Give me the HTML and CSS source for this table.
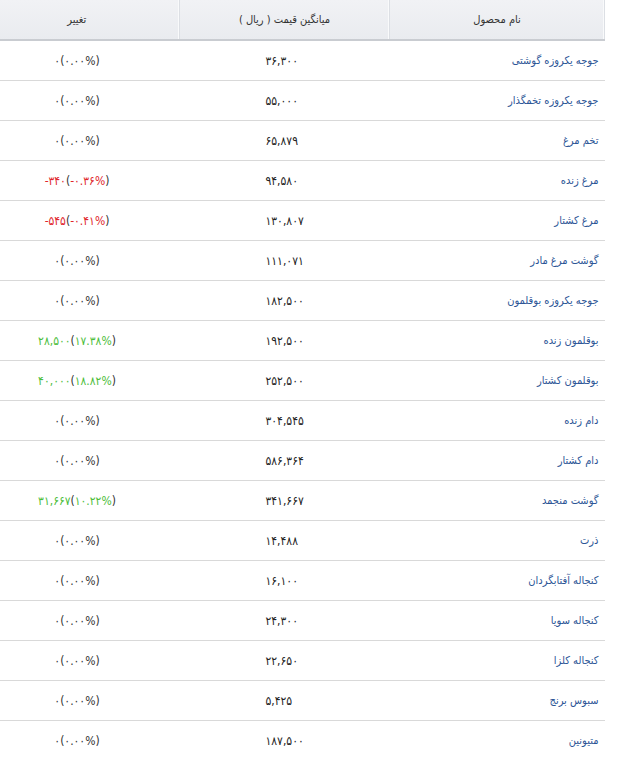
FILE: index.html
```html
<!DOCTYPE html>
<html lang="fa" dir="rtl">
<head>
<meta charset="utf-8">
<link rel="stylesheet" href="styles.css">
</head>
<body>
<table class="prices">
  <colgroup>
    <col class="c-name">
    <col class="c-price">
    <col class="c-change">
  </colgroup>
  <thead>
    <tr>
      <th class="h-name">نام محصول</th>
      <th class="h-price">میانگین قیمت ( ریال )</th>
      <th class="h-change">تغییر</th>
    </tr>
  </thead>
  <tbody>
    <tr><td class="name">جوجه یکروزه گوشتی</td><td class="price">۳۶,۳۰۰</td><td class="change"><span>۰(۰.۰۰%)</span></td></tr>
    <tr><td class="name">جوجه یکروزه تخمگذار</td><td class="price">۵۵,۰۰۰</td><td class="change"><span>۰(۰.۰۰%)</span></td></tr>
    <tr><td class="name">تخم مرغ</td><td class="price">۶۵,۸۷۹</td><td class="change"><span>۰(۰.۰۰%)</span></td></tr>
    <tr><td class="name">مرغ زنده</td><td class="price">۹۴,۵۸۰</td><td class="change"><span><b class="neg">-۳۴۰</b>(<b class="neg">-۰.۳۶%</b>)</span></td></tr>
    <tr><td class="name">مرغ کشتار</td><td class="price">۱۳۰,۸۰۷</td><td class="change"><span><b class="neg">-۵۴۵</b>(<b class="neg">-۰.۴۱%</b>)</span></td></tr>
    <tr><td class="name">گوشت مرغ مادر</td><td class="price">۱۱۱,۰۷۱</td><td class="change"><span>۰(۰.۰۰%)</span></td></tr>
    <tr><td class="name">جوجه یکروزه بوقلمون</td><td class="price">۱۸۲,۵۰۰</td><td class="change"><span>۰(۰.۰۰%)</span></td></tr>
    <tr><td class="name">بوقلمون زنده</td><td class="price">۱۹۲,۵۰۰</td><td class="change"><span><b class="pos">۲۸,۵۰۰</b>(<b class="pos">۱۷.۳۸%</b>)</span></td></tr>
    <tr><td class="name">بوقلمون کشتار</td><td class="price">۲۵۲,۵۰۰</td><td class="change"><span><b class="pos">۴۰,۰۰۰</b>(<b class="pos">۱۸.۸۲%</b>)</span></td></tr>
    <tr><td class="name">دام زنده</td><td class="price">۳۰۴,۵۴۵</td><td class="change"><span>۰(۰.۰۰%)</span></td></tr>
    <tr><td class="name">دام کشتار</td><td class="price">۵۸۶,۳۶۴</td><td class="change"><span>۰(۰.۰۰%)</span></td></tr>
    <tr><td class="name">گوشت منجمد</td><td class="price">۳۴۱,۶۶۷</td><td class="change"><span><b class="pos">۳۱,۶۶۷</b>(<b class="pos">۱۰.۲۲%</b>)</span></td></tr>
    <tr><td class="name">ذرت</td><td class="price">۱۴,۴۸۸</td><td class="change"><span>۰(۰.۰۰%)</span></td></tr>
    <tr><td class="name">کنجاله آفتابگردان</td><td class="price">۱۶,۱۰۰</td><td class="change"><span>۰(۰.۰۰%)</span></td></tr>
    <tr><td class="name">کنجاله سویا</td><td class="price">۲۴,۳۰۰</td><td class="change"><span>۰(۰.۰۰%)</span></td></tr>
    <tr><td class="name">کنجاله کلزا</td><td class="price">۲۲,۶۵۰</td><td class="change"><span>۰(۰.۰۰%)</span></td></tr>
    <tr><td class="name">سبوس برنج</td><td class="price">۵,۴۲۵</td><td class="change"><span>۰(۰.۰۰%)</span></td></tr>
    <tr><td class="name">متیونین</td><td class="price">۱۸۷,۵۰۰</td><td class="change"><span>۰(۰.۰۰%)</span></td></tr>
  </tbody>
</table>
</body>
</html>
```

FILE: styles.css
```css
html, body {
  margin: 0;
  padding: 0;
  background: #ffffff;
  overflow: hidden;
}

body {
  font-family: "DejaVu Sans Condensed", "DejaVu Sans", sans-serif;
  font-stretch: condensed;
  font-size: 11px;
  color: #333333;
}

.prices {
  width: 605px;
  margin-right: 13px;
  border-collapse: collapse;
  table-layout: fixed;
}

.c-name { width: 215px; }
.c-price { width: 210px; }
.c-change { width: 180px; }

thead tr {
  background: linear-gradient(#f1f2f5, #e9ebef);
}

th {
  height: 39px;
  padding: 0;
  font-weight: normal;
  color: #333333;
  text-align: center;
  border-bottom: 2px solid #c9ccd1;
  border-left: 1px solid #dcdfe4;
  box-shadow: inset -1px 0 0 #f9fafb;
}

th.h-name {
  border-right: 1px solid #dcdfe4;
}

th.h-change {
  padding-right: 25px;
  border-left: none;
}

td {
  height: 39px;
  padding: 0;
  border-bottom: 1px solid #d9d9d9;
}

td.name {
  text-align: right;
  padding-right: 6px;
  color: #2c5596;
}

td.price {
  direction: ltr;
  text-align: left;
  padding-left: 86px;
  font-size: 12px;
  color: #222222;
}

td.change {
  text-align: center;
  padding-right: 25px;
  font-size: 12px;
}

td.change span {
  direction: ltr;
  unicode-bidi: isolate;
  color: #333333;
}

b {
  font-weight: normal;
}

.neg { color: #e0262b; }
.pos { color: #4cbd3a; }

tbody tr:last-child td { border-bottom: none; }
```
